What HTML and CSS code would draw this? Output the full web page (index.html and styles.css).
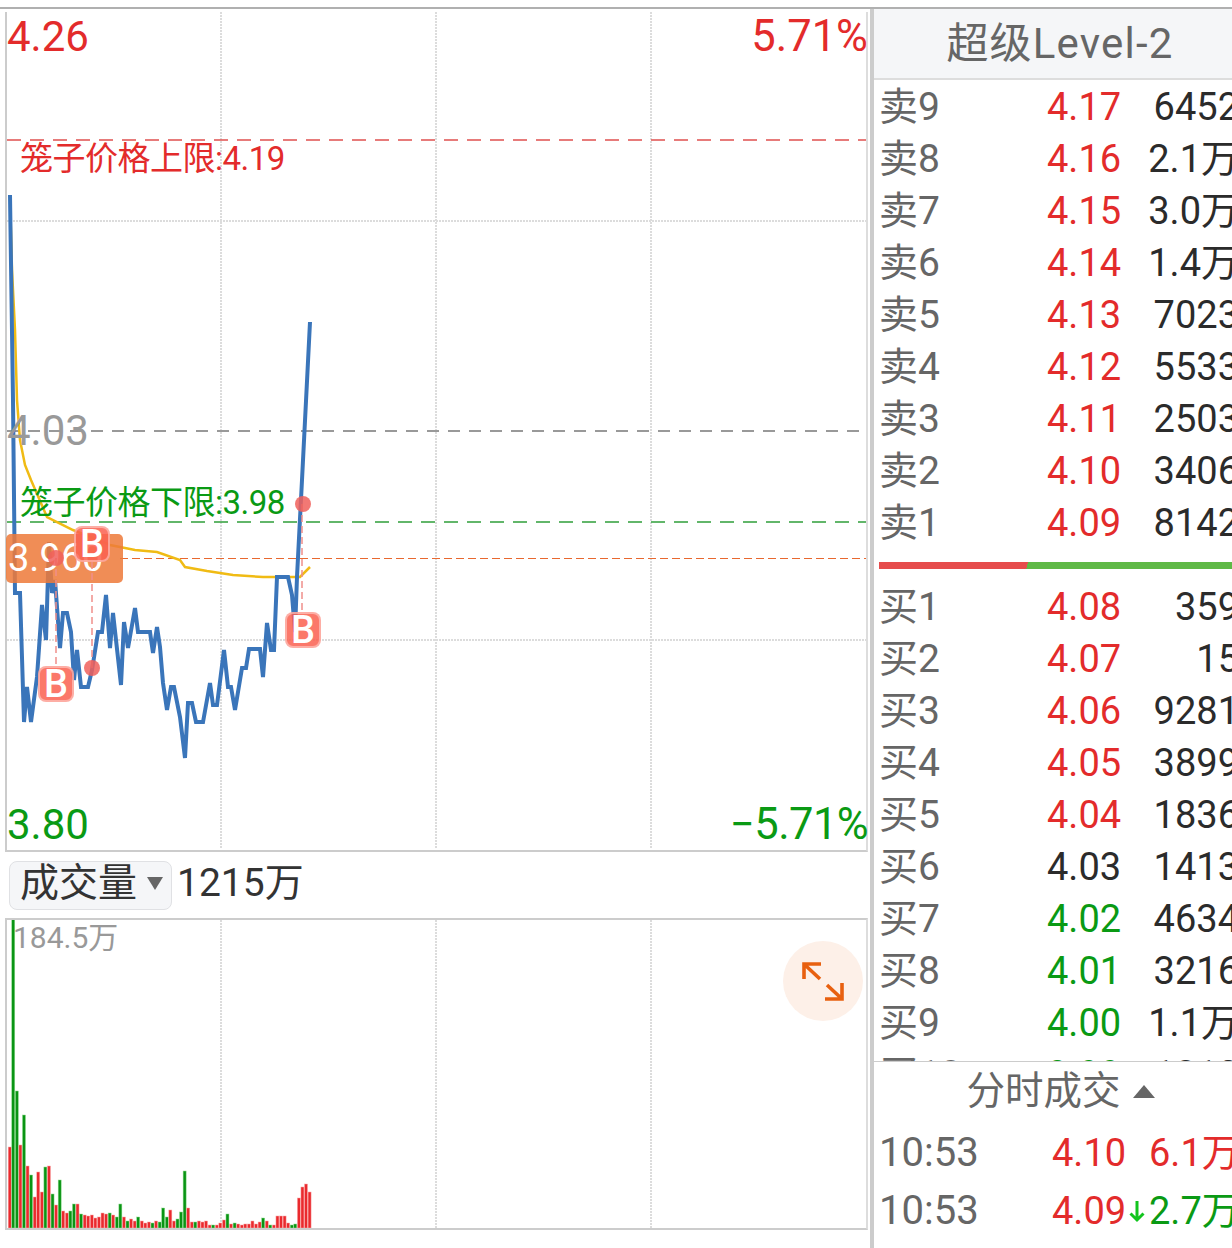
FILE: index.html
```html
<!DOCTYPE html>
<html lang="zh-CN">
<head>
    <meta charset="UTF-8">
    <meta name="viewport" content="width=device-width, initial-scale=1.0">
    <title>分时</title>
    <link rel="stylesheet" href="styles.css">
</head>
<body>
    <div class="screen">
        <div class="charts">
            <div class="panel price-panel">
                <svg class="layer" viewBox="7 12 859 837">
                    <g class="grid">
                        <path d="M221 12V849M436 12V849M651 12V849M7 221H866M7 640H866"/>
                    </g>
                    <path class="limit mid" d="M7 431H866"/>
                    <path class="limit upper" d="M7 140H866"/>
                    <path class="limit lower" d="M7 522H866"/>
                    <path class="limit last" d="M120 558.5H866"/>
                    <polyline class="avg" points="10,195 12,270 15,330 17,400 20,440 25,465 31,480 47,517 73,530 110,545 135,550 157,552 180,560 185,567 207,571 233,575 263,577 300,577 310,567"/>
                    <polyline class="price" points="10,195 13,400 15,593 20,593 24,722 27,687 31,722 37,677 42,605 46,640 49,542 52,593 55,580 60,648 63,613 67,613 71,632 74,680 77,650 81,687 88,687 92,670 98,632 102,632 106,595 110,648 113,613 121,685 124,622 128,648 135,608 138,632 150,632 153,653 157,627 160,647 163,683 167,710 171,687 174,687 180,717 185,758 188,703 192,703 196,722 203,722 210,683 213,705 217,705 224,650 228,687 231,687 235,710 242,668 246,668 249,649 260,649 263,677 267,623 271,650 274,650 277,577 288,577 292,595 295,632 297,577 302,480 310,322"/>
                </svg>

                <span class="axis-label top-left up">4.26</span>
                <span class="axis-label top-right up">5.71%</span>
                <span class="axis-label mid-left">4.03</span>
                <span class="axis-label bottom-left down">3.80</span>
                <span class="axis-label bottom-right down">−5.71%</span>
                <span class="cage-label cage-upper up">笼子价格上限:4.19</span>
                <span class="cage-label cage-lower down">笼子价格下限:3.98</span>
                <span class="last-price">3.960</span>

                <svg class="layer" viewBox="7 12 859 837">
                    <path class="link" d="M56 558V665M92 562V668M302 504V612"/>
                    <circle class="dot" cx="56" cy="558" r="8"/>
                    <circle class="dot" cx="92" cy="668" r="8"/>
                    <circle class="dot" cx="303" cy="504" r="8"/>
                </svg>

                <span class="badge badge-a">B</span>
                <span class="badge badge-b">B</span>
                <span class="badge badge-c">B</span>
            </div>

            <div class="volume-tabs">
                <div class="select">成交量<i class="caret"></i></div>
                <span class="volume-total">1215万</span>
            </div>

            <div class="panel volume-panel">
                <span class="volume-max">184.5万</span>
                <svg class="layer" id="volume" viewBox="7 919 859 308">
                    <g class="grid">
                        <path d="M221 919V1227M436 919V1227M651 919V1227"/>
                    </g>
                </svg>
                <div class="expand">
                    <svg width="80" height="80" viewBox="783 941 80 80">
                        <path d="M804 979V964H821M805 965L820 979M842 983V999H825M841 998L827 985"/>
                    </svg>
                </div>
            </div>

            <div class="time-axis">
                <span>09:30</span>
                <span>15:00</span>
            </div>
        </div>

        <div class="side">
            <div class="side-title">超级Level-2</div>

            <div class="depth">
                <div class="row"><span class="name">卖9</span><span class="up">4.17</span><span class="amount">6452</span></div>
                <div class="row"><span class="name">卖8</span><span class="up">4.16</span><span class="amount">2.1万</span></div>
                <div class="row"><span class="name">卖7</span><span class="up">4.15</span><span class="amount">3.0万</span></div>
                <div class="row"><span class="name">卖6</span><span class="up">4.14</span><span class="amount">1.4万</span></div>
                <div class="row"><span class="name">卖5</span><span class="up">4.13</span><span class="amount">7023</span></div>
                <div class="row"><span class="name">卖4</span><span class="up">4.12</span><span class="amount">5533</span></div>
                <div class="row"><span class="name">卖3</span><span class="up">4.11</span><span class="amount">2503</span></div>
                <div class="row"><span class="name">卖2</span><span class="up">4.10</span><span class="amount">3406</span></div>
                <div class="row"><span class="name">卖1</span><span class="up">4.09</span><span class="amount">8142</span></div>

                <div class="ratio"></div>

                <div class="row"><span class="name">买1</span><span class="up">4.08</span><span class="amount">359</span></div>
                <div class="row"><span class="name">买2</span><span class="up">4.07</span><span class="amount">15</span></div>
                <div class="row"><span class="name">买3</span><span class="up">4.06</span><span class="amount">9281</span></div>
                <div class="row"><span class="name">买4</span><span class="up">4.05</span><span class="amount">3899</span></div>
                <div class="row"><span class="name">买5</span><span class="up">4.04</span><span class="amount">1836</span></div>
                <div class="row"><span class="name">买6</span><span>4.03</span><span class="amount">1413</span></div>
                <div class="row"><span class="name">买7</span><span class="down">4.02</span><span class="amount">4634</span></div>
                <div class="row"><span class="name">买8</span><span class="down">4.01</span><span class="amount">3216</span></div>
                <div class="row"><span class="name">买9</span><span class="down">4.00</span><span class="amount">1.1万</span></div>
                <div class="row"><span class="name">买10</span><span class="down">3.99</span><span class="amount">1812</span></div>
            </div>

            <div class="trades">
                <div class="trades-title">分时成交<i class="caret-up"></i></div>
                <div class="trade">
                    <span class="time">10:53</span>
                    <span class="up">4.10</span>
                    <span class="flow"></span>
                    <span class="up">6.1万</span>
                </div>
                <div class="trade">
                    <span class="time">10:53</span>
                    <span class="up">4.09</span>
                    <span class="flow">
                        <svg width="18" height="24" viewBox="0 0 18 24"><path d="M9 2V21M2.5 14.5L9 21L15.5 14.5"/></svg>
                    </span>
                    <span class="down">2.7万</span>
                </div>
            </div>
        </div>
    </div>
    <script src="script.js"></script>
</body>
</html>
```

FILE: styles.css
```css
body {
    margin: 0;
    width: 1232px;
    height: 1248px;
    overflow: hidden;
    background: #fff;
    font-family: Roboto, "Noto Sans CJK SC", sans-serif;
    color: #2b2b2b;
}

.up { color: #e32b2b; }
.down { color: #0a9a14; }

.screen {
    display: flex;
    height: 1241px;
    margin-top: 7px;
    border-top: 2px solid #b0b0b0;
}

.charts {
    width: 870px;
    flex: none;
    padding-left: 5px;
    box-sizing: border-box;
}

.panel {
    position: relative;
    width: 863px;
    box-sizing: border-box;
    border-left: 2px solid #ccc;
    border-right: 2px solid #ddd;
    border-bottom: 2px solid #ccc;
}

.price-panel {
    height: 840px;
    margin-top: 3px;
}

.layer {
    position: absolute;
    left: 0;
    top: 0;
    width: 859px;
    height: 837px;
}

.grid path {
    fill: none;
    stroke: #dcdcdc;
    stroke-width: 2;
    stroke-dasharray: 2 1;
}

.limit {
    fill: none;
    stroke-width: 1.5;
    stroke-dasharray: 14 9;
}

.limit.mid { stroke: #999; stroke-width: 2; stroke-dasharray: 12 9; }
.limit.upper { stroke: #e0504f; }
.limit.lower { stroke: #2f9f3a; }
.limit.last { stroke: #e8682f; stroke-width: 1; stroke-dasharray: 8 4; }

.avg {
    fill: none;
    stroke: #f0bb14;
    stroke-width: 2.5;
}

.price {
    fill: none;
    stroke: #3a75ba;
    stroke-width: 4;
    stroke-linejoin: miter;
}

.axis-label {
    position: absolute;
    font-size: 42px;
    line-height: 50px;
}

.top-left { left: 0; top: 0; }
.top-right { right: -2px; top: 0; font-size: 43.5px; }
.mid-left { left: 0; top: 394px; color: #999; }
.bottom-left { left: 0; top: 788px; }
.bottom-right { right: -2px; top: 788px; font-size: 43.5px; letter-spacing: -0.6px; }

.cage-label {
    position: absolute;
    left: 13px;
    font-size: 33px;
    line-height: 40px;
    letter-spacing: -0.5px;
    white-space: nowrap;
}

.cage-upper { top: 127px; }
.cage-lower { top: 471px; }

.last-price {
    position: absolute;
    left: -1px;
    top: 522px;
    width: 117px;
    height: 49px;
    padding-left: 2px;
    box-sizing: border-box;
    border-radius: 5px;
    background: rgba(238, 122, 58, 0.86);
    color: #fff;
    font-size: 38px;
    line-height: 49px;
}

.link {
    fill: none;
    stroke: #f08f8a;
    stroke-width: 1.5;
    stroke-dasharray: 7 4;
}

.dot {
    fill: #f0605c;
    fill-opacity: 0.85;
}

.badge {
    position: absolute;
    width: 36px;
    height: 36px;
    box-sizing: border-box;
    border: 2px solid rgba(255, 255, 255, 0.4);
    border-radius: 8px;
    background: rgba(250, 96, 80, 0.85);
    color: #fff;
    font-size: 38px;
    font-weight: 500;
    line-height: 33px;
    text-align: center;
}

.badge-a { left: 67px; top: 514px; }
.badge-b { left: 31px; top: 654px; }
.badge-c { left: 278px; top: 600px; }

.volume-tabs {
    display: flex;
    align-items: center;
    gap: 5px;
    height: 66px;
    padding-left: 4px;
}

.select {
    display: flex;
    align-items: center;
    width: 163px;
    height: 49px;
    padding: 0 0 3px 10px;
    box-sizing: border-box;
    border: 1px solid #e0e1e4;
    border-radius: 8px;
    background: #f5f6f8;
    font-size: 39px;
    line-height: 39px;
    color: #333;
}

.caret {
    width: 0;
    height: 0;
    margin-left: 10px;
    border-left: 8px solid transparent;
    border-right: 8px solid transparent;
    border-top: 13px solid #666;
}

.volume-total {
    margin-bottom: 3px;
    font-size: 39px;
    line-height: 39px;
    color: #333;
}

.volume-panel {
    height: 312px;
    border-top: 2px solid #ccc;
}

#volume { height: 308px; }

.bar-red { fill: #ea2a2e; stroke: #f9a9a9; stroke-width: 0.5; }
.bar-green { fill: #0a9414; stroke: #8fdc8f; stroke-width: 0.5; }

.volume-max {
    position: absolute;
    left: 6px;
    top: 0;
    font-size: 30px;
    line-height: 36px;
    color: #999;
}

.expand {
    position: absolute;
    right: 3px;
    top: 21px;
    width: 80px;
    height: 80px;
    border-radius: 50%;
    background: #fdf0e8;
}

.expand path {
    fill: none;
    stroke: #e8600f;
    stroke-width: 3.6;
}

.time-axis {
    display: flex;
    justify-content: space-between;
    width: 861px;
    height: 20px;
    padding-top: 14px;
    font-size: 38px;
    line-height: 44px;
    color: #999;
}

.side {
    flex: none;
    width: 362px;
    box-sizing: border-box;
    border-left: 4px solid #ccc;
    overflow: hidden;
}

.side-title {
    height: 71px;
    padding-left: 14px;
    box-sizing: border-box;
    border-bottom: 2px solid #ddd;
    background: #f5f6f8;
    font-size: 42px;
    line-height: 70px;
    letter-spacing: 1.2px;
    text-align: center;
    color: #666;
}

.depth {
    height: 981px;
    overflow: hidden;
    border-bottom: 1px solid #ccc;
}

.row {
    display: grid;
    grid-template-columns: 168px 79px 113px;
    width: 360px;
    height: 52px;
    padding-left: 5px;
    font-size: 38px;
    line-height: 54px;
    white-space: nowrap;
}

.name {
    font-size: 39px;
    color: #666;
}

.amount {
    text-align: right;
    justify-self: end;
}

.ratio {
    height: 7px;
    margin: 14px 0 11px 5px;
    background: linear-gradient(105deg, #e64c4c 42%, #5fb946 42%);
}

.trades-title {
    display: flex;
    align-items: center;
    justify-content: center;
    height: 58px;
    padding: 0 0 4px 15px;
    font-size: 38.5px;
    line-height: 38px;
    color: #666;
}

.caret-up {
    width: 0;
    height: 0;
    margin-left: 12px;
    border-left: 11px solid transparent;
    border-right: 11px solid transparent;
    border-bottom: 13px solid #666;
}

.trade {
    display: grid;
    grid-template-columns: 173px 76px 21px 100px;
    height: 58px;
    padding-left: 5px;
    font-size: 38px;
    line-height: 58px;
    white-space: nowrap;
}

.time {
    font-size: 40px;
    color: #666;
}

.flow {
    display: flex;
    align-items: center;
}

.flow path {
    fill: none;
    stroke: #12c51e;
    stroke-width: 3;
}
```

FILE: script.js
```js
// volume bars: [height, 1 = red / 0 = green]
const bars = [
    [81,1],[309,0],[137,0],[83,1],[113,0],[62,1],[53,0],[31,1],[56,1],[36,1],
    [61,0],[62,1],[34,0],[23,1],[48,0],[17,1],[15,1],[17,0],[24,0],[24,1],
    [14,0],[13,1],[12,1],[13,1],[10,1],[11,1],[15,1],[14,1],[15,0],[13,1],
    [11,0],[24,0],[11,1],[7,0],[9,1],[7,1],[11,0],[7,1],[5,1],[6,1],
    [5,0],[7,1],[6,0],[20,0],[11,0],[18,1],[7,1],[9,0],[16,0],[57,0],
    [20,1],[6,1],[6,0],[7,1],[6,1],[7,1],[3,1],[3,0],[3,1],[5,1],
    [8,1],[14,0],[4,1],[5,0],[4,1],[3,1],[4,1],[4,1],[7,1],[4,1],
    [6,1],[10,0],[7,1],[3,0],[3,1],[12,1],[12,1],[12,1],[5,1],[3,0],
    [4,0],[30,1],[41,1],[44,1],[36,1]
];

const svg = document.getElementById('volume');
bars.forEach((bar, i) => {
    const rect = document.createElementNS('http://www.w3.org/2000/svg', 'rect');
    rect.setAttribute('x', (8.2 + i * 3.57).toFixed(2));
    rect.setAttribute('y', 1227 - bar[0]);
    rect.setAttribute('width', 3);
    rect.setAttribute('height', bar[0]);
    rect.setAttribute('class', bar[1] ? 'bar-red' : 'bar-green');
    svg.appendChild(rect);
});
```
